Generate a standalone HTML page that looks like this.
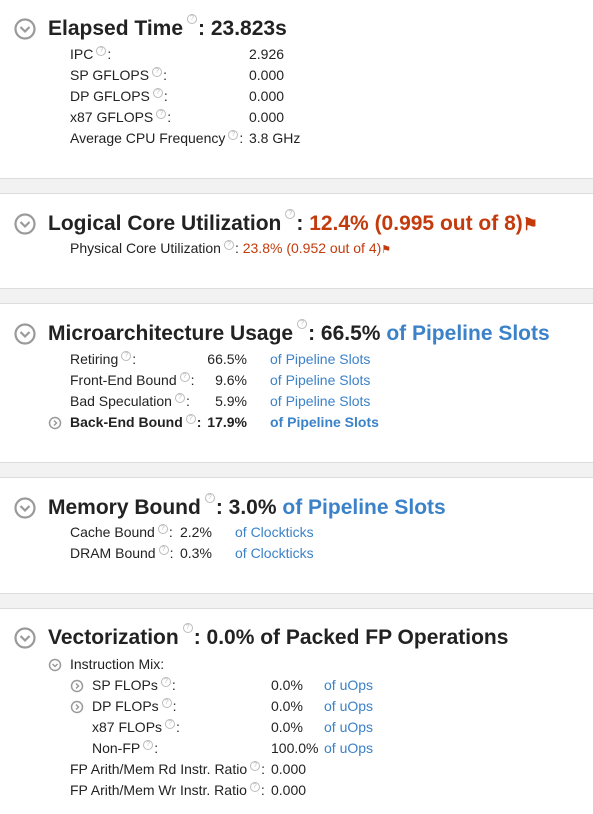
<!DOCTYPE html>
<html><head><style>
body{margin:0;width:593px;height:814px;background:#fff;position:relative;overflow:hidden;font-family:"Liberation Sans",sans-serif;color:#222}
.a{position:absolute;white-space:nowrap}
.t{font-size:21px;font-weight:bold;line-height:28px}
.r{font-size:14px;line-height:21px}
.sep{position:absolute;left:0;width:593px;height:14px;background:#f2f2f2;border-top:1px solid #ddd;border-bottom:1px solid #ddd}
.h{display:inline-block;width:8px;height:8px;border:1px solid #bbb;border-radius:50%;font-size:7px;line-height:8px;text-align:center;color:#bbb;vertical-align:top;margin:0 1px 0 3px;position:relative;top:2px;font-weight:normal}
.t .h{top:-1px;margin-left:4px}
.o{color:#c33b0c}.b{color:#3b82c8}
.rt{text-align:right}
</style></head><body>
<svg width="593" height="814" style="position:absolute;left:0;top:0">
<g fill="none" stroke="#9a9a9a" stroke-width="2.2">
<circle cx="25" cy="29" r="9.5"/><polyline points="20.5,27 25,31.5 29.5,27"/>
<circle cx="25" cy="224" r="9.5"/><polyline points="20.5,222 25,226.5 29.5,222"/>
<circle cx="25" cy="334" r="9.5"/><polyline points="20.5,332 25,336.5 29.5,332"/>
<circle cx="25" cy="508" r="9.5"/><polyline points="20.5,506 25,510.5 29.5,506"/>
<circle cx="25" cy="638" r="9.5"/><polyline points="20.5,636 25,640.5 29.5,636"/>
</g>
<g fill="none" stroke="#9a9a9a" stroke-width="1.5">
<circle cx="55" cy="423" r="5.5"/><polyline points="54,420.5 56.5,423 54,425.5"/>
<circle cx="55" cy="665" r="5.5"/><polyline points="52.5,664 55,666.5 57.5,664"/>
<circle cx="77" cy="686" r="5.5"/><polyline points="76,683.5 78.5,686 76,688.5"/>
<circle cx="77" cy="707" r="5.5"/><polyline points="76,704.5 78.5,707 76,709.5"/>
</g>
</svg>
<div class="sep" style="top:178px"></div>
<div class="sep" style="top:288px"></div>
<div class="sep" style="top:462px"></div>
<div class="sep" style="top:593px"></div>

<div class="a t" style="left:48px;top:15px">Elapsed Time<span class="h">?</span>: 23.823s</div>
<div class="a r" style="left:70px;top:44px">IPC<span class="h">?</span>:</div><div class="a r" style="left:249px;top:44px">2.926</div>
<div class="a r" style="left:70px;top:65px">SP GFLOPS<span class="h">?</span>:</div><div class="a r" style="left:249px;top:65px">0.000</div>
<div class="a r" style="left:70px;top:86px">DP GFLOPS<span class="h">?</span>:</div><div class="a r" style="left:249px;top:86px">0.000</div>
<div class="a r" style="left:70px;top:107px">x87 GFLOPS<span class="h">?</span>:</div><div class="a r" style="left:249px;top:107px">0.000</div>
<div class="a r" style="left:70px;top:128px">Average CPU Frequency<span class="h">?</span>:</div><div class="a r" style="left:249px;top:128px">3.8 GHz</div>

<div class="a t" style="left:48px;top:210px">Logical Core Utilization<span class="h">?</span>: <span class="o">12.4% (0.995 out of 8)</span><span class="o" style="font-size:17px">&#9873;</span></div>
<div class="a r" style="left:70px;top:238px">Physical Core Utilization<span class="h">?</span>: <span class="o">23.8% (0.952 out of 4)</span><span class="o" style="font-size:11px">&#9873;</span></div>

<div class="a t" style="left:48px;top:320px">Microarchitecture Usage<span class="h">?</span>: 66.5% <span class="b">of Pipeline Slots</span></div>
<div class="a r" style="left:70px;top:349px">Retiring<span class="h">?</span>:</div><div class="a r rt" style="left:197px;width:50px;top:349px">66.5%</div><div class="a r b" style="left:270px;top:349px">of Pipeline Slots</div>
<div class="a r" style="left:70px;top:370px">Front-End Bound<span class="h">?</span>:</div><div class="a r rt" style="left:197px;width:50px;top:370px">9.6%</div><div class="a r b" style="left:270px;top:370px">of Pipeline Slots</div>
<div class="a r" style="left:70px;top:391px">Bad Speculation<span class="h">?</span>:</div><div class="a r rt" style="left:197px;width:50px;top:391px">5.9%</div><div class="a r b" style="left:270px;top:391px">of Pipeline Slots</div>
<div class="a r" style="left:70px;top:412px;font-weight:bold">Back-End Bound<span class="h">?</span>:</div><div class="a r rt" style="left:197px;width:50px;top:412px;font-weight:bold">17.9%</div><div class="a r b" style="left:270px;top:412px;font-weight:bold">of Pipeline Slots</div>

<div class="a t" style="left:48px;top:494px">Memory Bound<span class="h">?</span>: 3.0% <span class="b">of Pipeline Slots</span></div>
<div class="a r" style="left:70px;top:522px">Cache Bound<span class="h">?</span>:</div><div class="a r" style="left:180px;top:522px">2.2%</div><div class="a r b" style="left:235px;top:522px">of Clockticks</div>
<div class="a r" style="left:70px;top:543px">DRAM Bound<span class="h">?</span>:</div><div class="a r" style="left:180px;top:543px">0.3%</div><div class="a r b" style="left:235px;top:543px">of Clockticks</div>

<div class="a t" style="left:48px;top:624px">Vectorization<span class="h">?</span>: 0.0% of Packed FP Operations</div>
<div class="a r" style="left:70px;top:654px">Instruction Mix:</div>
<div class="a r" style="left:92px;top:675px">SP FLOPs<span class="h">?</span>:</div><div class="a r" style="left:271px;top:675px">0.0%</div><div class="a r b" style="left:324px;top:675px">of uOps</div>
<div class="a r" style="left:92px;top:696px">DP FLOPs<span class="h">?</span>:</div><div class="a r" style="left:271px;top:696px">0.0%</div><div class="a r b" style="left:324px;top:696px">of uOps</div>
<div class="a r" style="left:92px;top:717px">x87 FLOPs<span class="h">?</span>:</div><div class="a r" style="left:271px;top:717px">0.0%</div><div class="a r b" style="left:324px;top:717px">of uOps</div>
<div class="a r" style="left:92px;top:738px">Non-FP<span class="h">?</span>:</div><div class="a r" style="left:271px;top:738px">100.0%</div><div class="a r b" style="left:324px;top:738px">of uOps</div>
<div class="a r" style="left:70px;top:759px">FP Arith/Mem Rd Instr. Ratio<span class="h">?</span>:</div><div class="a r" style="left:271px;top:759px">0.000</div>
<div class="a r" style="left:70px;top:780px">FP Arith/Mem Wr Instr. Ratio<span class="h">?</span>:</div><div class="a r" style="left:271px;top:780px">0.000</div>
</body></html>
